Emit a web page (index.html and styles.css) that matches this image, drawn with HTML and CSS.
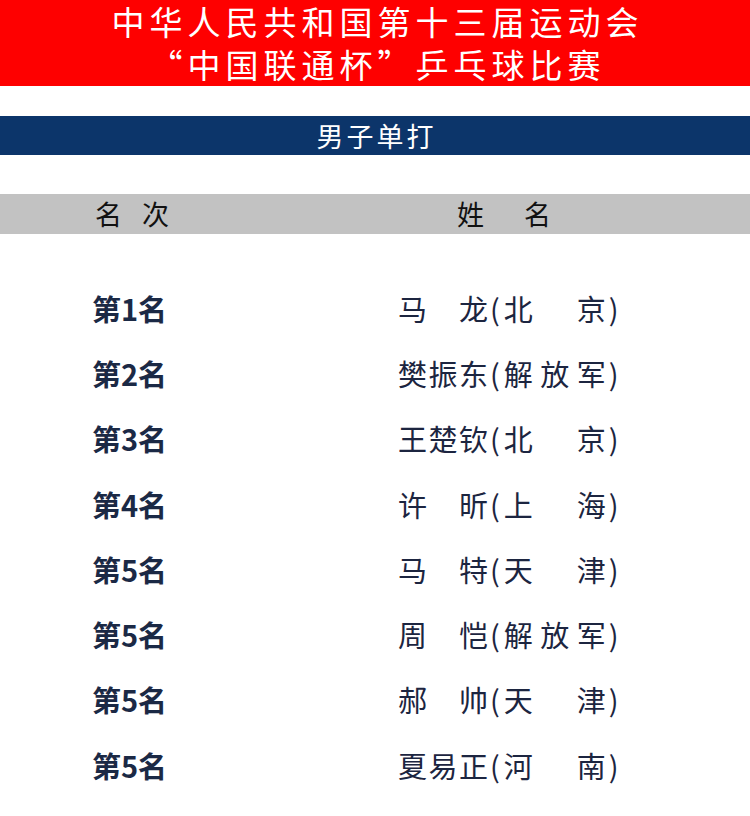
FILE: index.html
```html
<!DOCTYPE html>
<html lang="zh-CN">
<head>
<meta charset="utf-8">
<title>男子单打</title>
<link rel="stylesheet" href="styles.css">
</head>
<body>
<header class="banner">
  <div class="banner-line">中华人民共和国第十三届运动会</div>
  <div class="banner-line">“中国联通杯”乒乓球比赛</div>
</header>
<div class="event">男子单打</div>
<div class="table-head">
  <span class="th-rank">名 次</span>
  <span class="th-name">姓 名</span>
</div>
<ol class="results">
  <li class="row"><span class="rank">第1名</span><span class="who"><span class="nm">马龙</span>(<span class="rg">北京</span>)</span></li>
  <li class="row"><span class="rank">第2名</span><span class="who"><span class="nm">樊振东</span>(<span class="rg">解放军</span>)</span></li>
  <li class="row"><span class="rank">第3名</span><span class="who"><span class="nm">王楚钦</span>(<span class="rg">北京</span>)</span></li>
  <li class="row"><span class="rank">第4名</span><span class="who"><span class="nm">许昕</span>(<span class="rg">上海</span>)</span></li>
  <li class="row"><span class="rank">第5名</span><span class="who"><span class="nm">马特</span>(<span class="rg">天津</span>)</span></li>
  <li class="row"><span class="rank">第5名</span><span class="who"><span class="nm">周恺</span>(<span class="rg">解放军</span>)</span></li>
  <li class="row"><span class="rank">第5名</span><span class="who"><span class="nm">郝帅</span>(<span class="rg">天津</span>)</span></li>
  <li class="row"><span class="rank">第5名</span><span class="who"><span class="nm">夏易正</span>(<span class="rg">河南</span>)</span></li>
</ol>
</body>
</html>
```

FILE: styles.css
```css
html, body {
  margin: 0;
  padding: 0;
  background: #ffffff;
}
body {
  width: 750px;
  font-family: "Noto Sans CJK SC", "Noto Sans", sans-serif;
}
.banner {
  background: #fe0000;
  height: 86px;
  color: #ffffff;
  text-align: center;
  font-size: 33px;
  letter-spacing: 5px;
  line-height: 43px;
  padding-left: 5px;
}
.banner-line {
  height: 43px;
}
.event {
  margin-top: 30px;
  height: 39px;
  background: #0c356a;
  color: #ffffff;
  font-size: 27px;
  letter-spacing: 3px;
  line-height: 39px;
  text-align: center;
  padding-left: 3px;
}
.table-head {
  margin-top: 39px;
  height: 40px;
  background: #c2c2c2;
  display: flex;
  align-items: center;
  color: #111111;
  font-size: 27px;
  line-height: 40px;
}
.th-rank {
  margin-left: 95px;
  word-spacing: 14px;
}
.th-name {
  margin-left: 288px;
  word-spacing: 34px;
}
.results {
  list-style: none;
  margin: 0;
  padding: 41px 0 0 0;
}
.row {
  height: 65.3px;
  display: flex;
  align-items: center;
}
.rank {
  margin-left: 92px;
  width: 306px;
  font-size: 29px;
  font-weight: 700;
  color: #1b2945;
}
.who {
  font-size: 29px;
  color: #1c2540;
  display: flex;
  align-items: center;
}
.nm, .rg {
  display: inline-block;
  text-align: justify;
  text-align-last: justify;
}
.nm {
  width: 90px;
  margin-right: 2px;
}
.rg {
  width: 102px;
  margin-left: 4px;
  margin-right: 3px;
}
```
